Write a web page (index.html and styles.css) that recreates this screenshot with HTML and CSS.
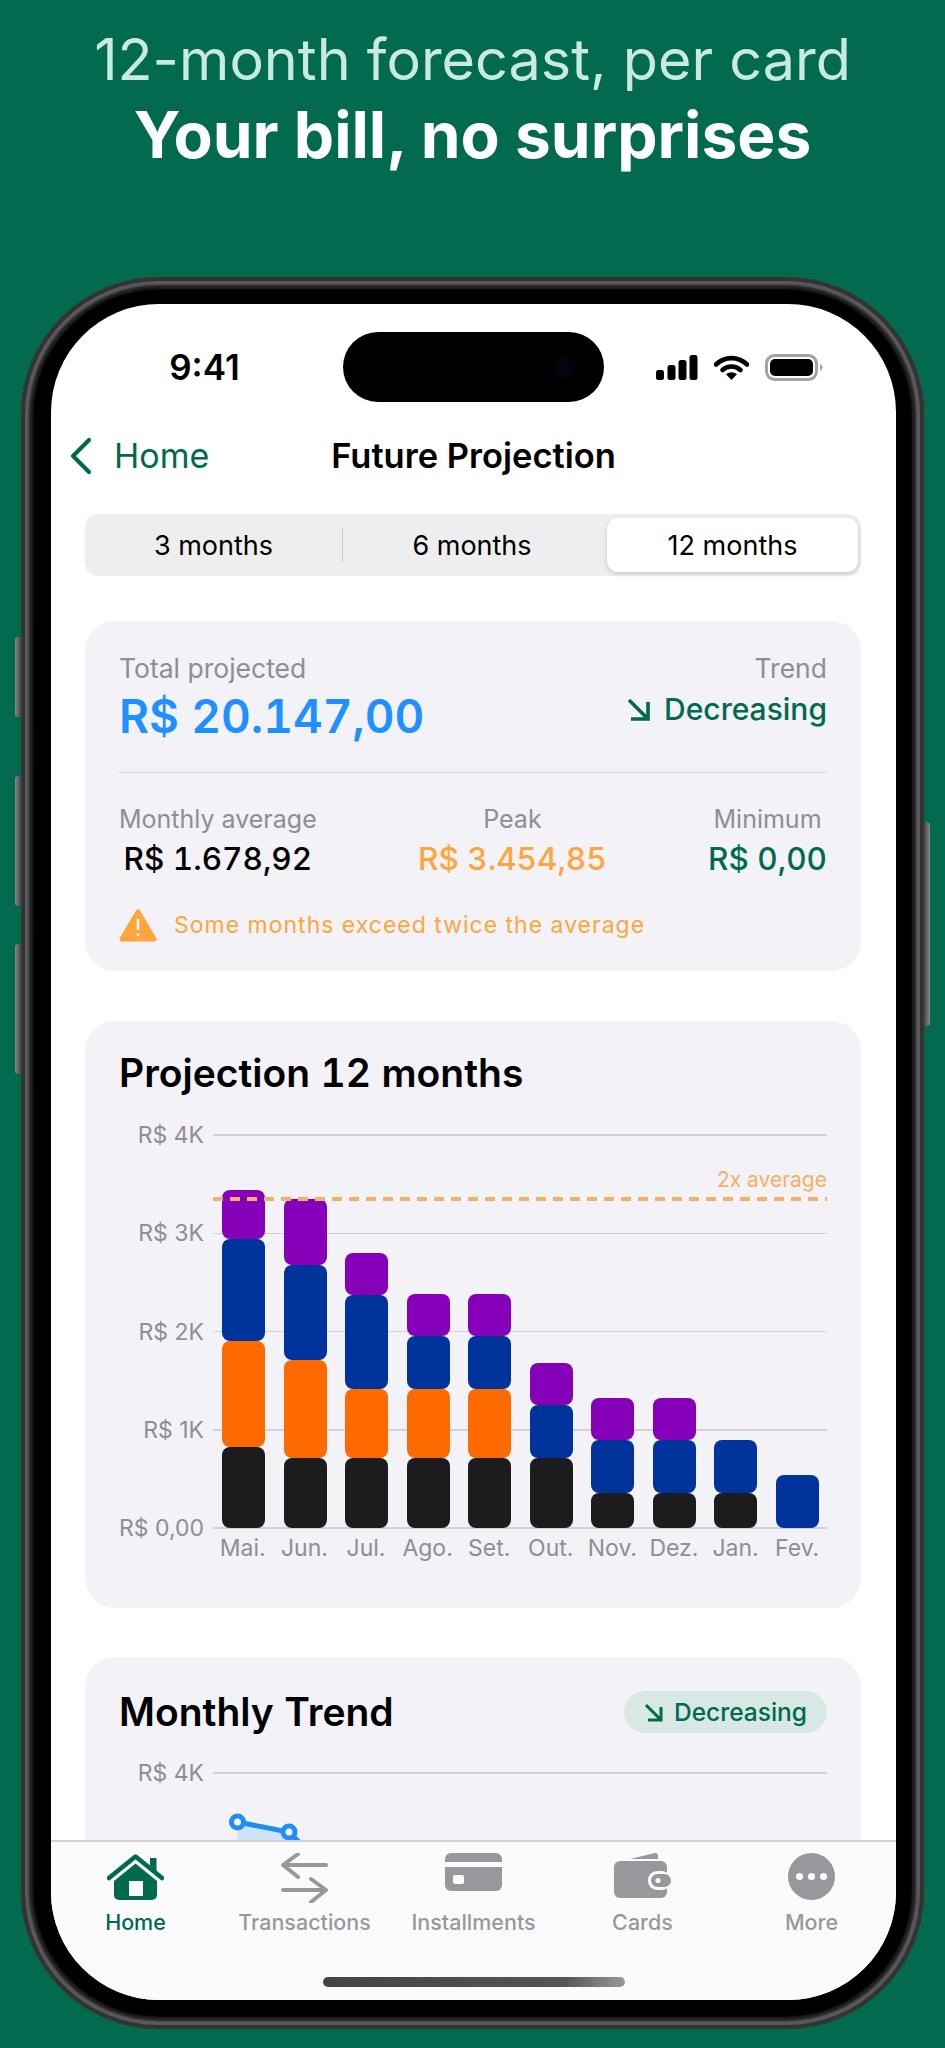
FILE: index.html
```html
<!DOCTYPE html>
<html lang="en">

<head>
    <meta charset="UTF-8">
    <title>Future Projection</title>
    <link rel="stylesheet" href="styles.css">
</head>

<body>
    <header class="promo">
        <p class="promo-sub">12-month forecast, per card</p>
        <h1 class="promo-title">Your bill, no surprises</h1>
    </header>

    <div class="phone">
        <span class="btn btn-mute"></span>
        <span class="btn btn-up"></span>
        <span class="btn btn-down"></span>
        <span class="btn btn-power"></span>

        <div class="screen">
            <div class="status">
                <span class="time">9:41</span>
                <span class="island"><i class="lens"></i></span>
                <span class="status-icons">
                    <svg width="42" height="25" viewBox="0 0 42 25"><rect x="0" y="15" width="8" height="10" rx="2.5"/><rect x="11.5" y="10" width="8" height="15" rx="2.5"/><rect x="22.5" y="5" width="8" height="20" rx="2.5"/><rect x="33.5" y="0" width="8" height="25" rx="2.5"/></svg>
                    <svg width="35" height="25" viewBox="0 0 35 25"><path d="M2 9.5C11 1 24 1 33 9.5" fill="none" stroke="#000" stroke-width="4.6" stroke-linecap="round"/><path d="M8.5 15C13.8 10.3 21.2 10.3 26.5 15" fill="none" stroke="#000" stroke-width="4.6" stroke-linecap="round"/><path d="M12 19.3C15.5 16.4 19.5 16.4 23 19.3L17.5 25Z"/></svg>
                    <svg width="58" height="27" viewBox="0 0 58 27"><rect x="1.5" y="1.5" width="50" height="24" rx="8" fill="none" stroke="#a2a2a2" stroke-width="3"/><rect x="5" y="5" width="43" height="17" rx="5"/><path d="M55 9.5L58 13.5L55 17.5Z" fill="#a2a2a2"/></svg>
                </span>
            </div>

            <nav class="navbar">
                <a class="back" href="javascript:void(0);">
                    <svg width="25" height="38" viewBox="0 0 25 38"><path d="M21 3L5 19L21 35" fill="none" stroke="#006a4e" stroke-width="4.2" stroke-linecap="round" stroke-linejoin="round"/></svg>
                    Home
                </a>
                <span class="nav-title">Future Projection</span>
            </nav>

            <div class="segment">
                <a class="seg-item" href="javascript:void(0);">3 months</a>
                <a class="seg-item seg-split" href="javascript:void(0);">6 months</a>
                <a class="seg-item seg-active" href="javascript:void(0);">12 months</a>
            </div>

            <section class="card card-summary">
                <div class="total-row">
                    <div>
                        <p class="label label-big">Total projected</p>
                        <p class="total">R$ 20.147,00</p>
                    </div>
                    <div class="trend">
                        <p class="label label-big">Trend</p>
                        <p class="trend-value">
                            <svg width="25" height="23" viewBox="0 0 25 23"><path d="M3 2L22 21M22 4V21H5" fill="none" stroke="#006a4e" stroke-width="3.6"/></svg>
                            Decreasing
                        </p>
                    </div>
                </div>
                <div class="stats">
                    <div class="stat">
                        <p class="label">Monthly average</p>
                        <p class="stat-value">R$ 1.678,92</p>
                    </div>
                    <div class="stat">
                        <p class="label">Peak</p>
                        <p class="stat-value orange">R$ 3.454,85</p>
                    </div>
                    <div class="stat">
                        <p class="label">Minimum</p>
                        <p class="stat-value green">R$ 0,00</p>
                    </div>
                </div>
                <p class="warning">
                    <svg width="38" height="33" viewBox="0 0 38 33"><path d="M19 3L35 30H3Z" fill="#ffa53d" stroke="#ffa53d" stroke-width="5" stroke-linejoin="round"/><rect x="17.7" y="10" width="2.6" height="11" fill="#f2f2f7"/><rect x="17.7" y="24" width="2.6" height="3" fill="#f2f2f7"/></svg>
                    Some months exceed twice the average
                </p>
            </section>

            <section class="card card-chart">
                <h2 class="card-title">Projection 12 months</h2>
                <div class="chart">
                    <div class="grid">
                        <div class="grid-row"><span>R$ 4K</span><i></i></div>
                        <div class="grid-row"><span>R$ 3K</span><i></i></div>
                        <div class="grid-row"><span>R$ 2K</span><i></i></div>
                        <div class="grid-row"><span>R$ 1K</span><i></i></div>
                        <div class="grid-row"><span>R$ 0,00</span><i></i></div>
                    </div>
                    <div class="bars">
                        <div class="bar"><b class="purple" style="height:49px"></b><b class="blue" style="height:102px"></b><b class="bright" style="height:106px"></b><b class="dark" style="height:81px"></b></div>
                        <div class="bar"><b class="purple" style="height:66px"></b><b class="blue" style="height:95px"></b><b class="bright" style="height:98px"></b><b class="dark" style="height:70px"></b></div>
                        <div class="bar"><b class="purple" style="height:42px"></b><b class="blue" style="height:94px"></b><b class="bright" style="height:69px"></b><b class="dark" style="height:70px"></b></div>
                        <div class="bar"><b class="purple" style="height:42px"></b><b class="blue" style="height:53px"></b><b class="bright" style="height:69px"></b><b class="dark" style="height:70px"></b></div>
                        <div class="bar"><b class="purple" style="height:42px"></b><b class="blue" style="height:53px"></b><b class="bright" style="height:69px"></b><b class="dark" style="height:70px"></b></div>
                        <div class="bar"><b class="purple" style="height:42px"></b><b class="blue" style="height:53px"></b><b class="dark" style="height:70px"></b></div>
                        <div class="bar"><b class="purple" style="height:42px"></b><b class="blue" style="height:53px"></b><b class="dark" style="height:35px"></b></div>
                        <div class="bar"><b class="purple" style="height:42px"></b><b class="blue" style="height:53px"></b><b class="dark" style="height:35px"></b></div>
                        <div class="bar"><b class="blue" style="height:53px"></b><b class="dark" style="height:35px"></b></div>
                        <div class="bar"><b class="blue" style="height:53px"></b></div>
                    </div>
                    <span class="avg-label">2x average</span>
                    <span class="avg-line"></span>
                </div>
                <div class="months">
                    <span>Mai.</span><span>Jun.</span><span>Jul.</span><span>Ago.</span><span>Set.</span>
                    <span>Out.</span><span>Nov.</span><span>Dez.</span><span>Jan.</span><span>Fev.</span>
                </div>
            </section>

            <section class="card card-trend">
                <div class="trend-head">
                    <h2 class="card-title">Monthly Trend</h2>
                    <span class="pill">
                        <svg width="20" height="19" viewBox="0 0 20 19"><path d="M2 2L17 17M17 4V17H4" fill="none" stroke="#006a4e" stroke-width="3"/></svg>
                        Decreasing
                    </span>
                </div>
                <div class="grid-row grid-single"><span>R$ 4K</span><i></i></div>
                <svg class="line-chart" width="200" height="110" viewBox="0 0 200 110">
                    <path d="M24.5 41L76 51L130 105V110H24.5Z" fill="#cfe4fa"/>
                    <path d="M24.5 41L76 51L130 105" fill="none" stroke="#1e8ff5" stroke-width="5"/>
                    <circle cx="24.5" cy="41" r="6" fill="#f2f2f7" stroke="#1e8ff5" stroke-width="5"/>
                    <circle cx="76" cy="51" r="6" fill="#f2f2f7" stroke="#1e8ff5" stroke-width="5"/>
                </svg>
            </section>

            <div class="tabbar">
                <div class="tabs">
                    <a class="tab tab-active" href="javascript:void(0);">
                        <svg width="57" height="47" viewBox="0 0 57 47"><path d="M2 25L28.5 3.5L55 25" fill="none" stroke="#006a4e" stroke-width="4.6" stroke-linecap="round" stroke-linejoin="round"/><rect x="43" y="5" width="6.5" height="13" fill="#006a4e"/><path d="M28.5 10.5L50 28V42a5 5 0 0 1-5 5H12a5 5 0 0 1-5-5V28Z" fill="#006a4e"/><rect x="22" y="28" width="14" height="15" fill="#fbfbfd"/></svg>
                        Home
                    </a>
                    <a class="tab" href="javascript:void(0);">
                        <svg width="47" height="50" viewBox="0 0 47 50"><path d="M45 12H2M17 1L2 12L17 24M2 37H45M30 26L45 37L30 49" fill="none" stroke="#98989c" stroke-width="4" stroke-linecap="round" stroke-linejoin="round"/></svg>
                        Transactions
                    </a>
                    <a class="tab" href="javascript:void(0);">
                        <svg width="57" height="38" viewBox="0 0 57 38"><path d="M0 9V6a6 6 0 0 1 6-6H51a6 6 0 0 1 6 6V9Z" fill="#98989c"/><path d="M0 14H57V32a6 6 0 0 1-6 6H6a6 6 0 0 1-6-6Z" fill="#98989c"/><rect x="8" y="22" width="11" height="9" rx="2" fill="#fbfbfd"/></svg>
                        Installments
                    </a>
                    <a class="tab" href="javascript:void(0);">
                        <svg width="57" height="45" viewBox="0 0 57 45"><path d="M16 6L41 0a3 3 0 0 1 3 3V6Z" fill="#98989c"/><rect x="0" y="8" width="53" height="37" rx="6" fill="#98989c"/><rect x="34" y="18" width="23" height="19" rx="9" fill="#fbfbfd"/><rect x="37" y="21" width="20" height="13" rx="6.5" fill="#98989c"/><circle cx="44" cy="27.5" r="2.6" fill="#fbfbfd"/></svg>
                        Cards
                    </a>
                    <a class="tab" href="javascript:void(0);">
                        <svg width="47" height="47" viewBox="0 0 47 47"><circle cx="23.5" cy="23.5" r="23.5" fill="#98989c"/><circle cx="11.5" cy="23.5" r="3.6" fill="#fbfbfd"/><circle cx="23.5" cy="23.5" r="3.6" fill="#fbfbfd"/><circle cx="35.5" cy="23.5" r="3.6" fill="#fbfbfd"/></svg>
                        More
                    </a>
                </div>
                <span class="home-bar"></span>
            </div>
        </div>
    </div>
</body>

</html>
```

FILE: styles.css
```css
* {
    margin: 0;
    padding: 0;
    box-sizing: border-box;
    font-family: Inter, 'Liberation Sans', sans-serif;
}

a {
    text-decoration: none;
}

html,
body {
    height: 100%;
}

body {
    width: 945px;
    height: 2048px;
    background: #016a4f;
    overflow: hidden;
}

.promo {
    height: 277px;
    padding-top: 21px;
    text-align: center;
}

.promo-sub {
    font-size: 57.5px;
    line-height: 76px;
    color: #c9eadf;
}

.promo-title {
    font-size: 64px;
    line-height: 76px;
    font-weight: 700;
    color: #fff;
}

/* phone frame */
.phone {
    position: relative;
    width: 903px;
    height: 1752px;
    margin-left: 21px;
    padding: 27px 28px 27px 30px;
    border-radius: 138px;
    background: #000;
    box-shadow: inset 0 0 0 4px #333, inset 0 0 2px 8px #5a5a5a, inset 0 0 2px 12px #222;
}

.btn {
    position: absolute;
    width: 8px;
    background: linear-gradient(90deg, #8a8a8a, #2c2c2c);
    border-radius: 3px;
}

.btn-mute {
    left: -6px;
    top: 360px;
    height: 80px;
}

.btn-up {
    left: -6px;
    top: 499px;
    height: 130px;
}

.btn-down {
    left: -6px;
    top: 667px;
    height: 130px;
}

.btn-power {
    right: -6px;
    top: 545px;
    height: 204px;
    background: linear-gradient(90deg, #2c2c2c, #8a8a8a);
}

.screen {
    position: relative;
    height: 1696px;
    border-radius: 108px;
    background: #fff;
    overflow: hidden;
}

/* status bar */
.status {
    display: grid;
    grid-template-columns: 1fr 261px 1fr;
    align-items: center;
    height: 126px;
}

.time {
    padding-left: 15px;
    text-align: center;
    font-size: 35px;
    font-weight: 600;
    color: #000;
}

.island {
    display: flex;
    align-items: center;
    justify-content: flex-end;
    height: 70px;
    padding-right: 28px;
    border-radius: 35px;
    background: #000;
}

.lens {
    width: 22px;
    height: 22px;
    border-radius: 50%;
    background: #03040f;
}

.status-icons {
    display: flex;
    align-items: center;
    gap: 16px;
    padding-left: 52px;
}

/* nav */
.navbar {
    position: relative;
    display: flex;
    align-items: center;
    justify-content: center;
    height: 50px;
}

.back {
    position: absolute;
    left: 17px;
    top: 7px;
    display: flex;
    align-items: center;
    gap: 21px;
    font-size: 34px;
    line-height: 38px;
    color: #006a4e;
}

.nav-title {
    font-size: 34.5px;
    font-weight: 600;
    color: #000;
}

/* segment */
.segment {
    display: grid;
    grid-template-columns: 257px 265px 1fr;
    height: 62px;
    margin: 34px 35px 0 34px;
    padding: 4px 3px 4px 0;
    border-radius: 13px;
    background: #eeeeef;
}

.seg-item {
    display: flex;
    align-items: center;
    justify-content: center;
    font-size: 27px;
    color: #000;
}

.seg-split {
    position: relative;
    padding-right: 5px;
}

.seg-split::before {
    content: "";
    position: absolute;
    left: 0;
    top: 10px;
    bottom: 10px;
    width: 1px;
    background: #c9c9ce;
}

.seg-active {
    background: #fff;
    border-radius: 11px;
    box-shadow: 0 2px 5px rgba(0, 0, 0, .16);
}

/* cards */
.card {
    margin: 45px 35px 0 34px;
    padding: 0 34px;
    border-radius: 30px;
    background: #f2f2f7;
}

.label {
    font-size: 25px;
    line-height: 30px;
    color: #8e8e93;
}

.label-big {
    font-size: 26.5px;
}

.card-summary {
    height: 350px;
    padding-top: 32px;
}

.total-row {
    display: flex;
    justify-content: space-between;
    height: 120px;
    border-bottom: 1px solid #d6d6db;
}

.total {
    margin-top: 7px;
    font-size: 46px;
    line-height: 52px;
    font-weight: 600;
    font-variant-numeric: tabular-nums;
    color: #1e90ff;
}

.trend {
    text-align: right;
}

.trend-value {
    display: flex;
    align-items: center;
    gap: 13px;
    margin-top: 6px;
    font-size: 30px;
    line-height: 40px;
    font-weight: 500;
    color: #006a4e;
}

.stats {
    display: flex;
    justify-content: space-between;
    margin-top: 31px;
}

.stat {
    text-align: center;
}

.stat-value {
    margin-top: 8px;
    font-size: 31.5px;
    line-height: 34px;
    font-weight: 500;
    font-variant-numeric: tabular-nums;
    color: #000;
}

.orange {
    color: #ffa53d;
}

.green {
    color: #006a4e;
}

.warning {
    display: flex;
    align-items: center;
    gap: 17px;
    margin-top: 31px;
    font-size: 23px;
    line-height: 36px;
    letter-spacing: 1px;
    color: #ffa53d;
}

.card-title {
    font-size: 39px;
    line-height: 44px;
    font-weight: 600;
    font-variant-numeric: tabular-nums;
    color: #000;
}

.card-chart {
    height: 587px;
    margin-top: 50px;
    padding-top: 30px;
}

.chart {
    position: relative;
    display: grid;
    height: 409px;
    margin-top: 32px;
}

.grid {
    grid-area: 1 / 1;
    display: flex;
    flex-direction: column;
    justify-content: space-between;
}

.grid-row {
    display: flex;
    align-items: center;
    gap: 9px;
    height: 16px;
}

.grid-row span {
    width: 85px;
    flex: none;
    font-size: 23px;
    text-align: right;
    white-space: nowrap;
    color: #8e8e93;
}

.grid-row i {
    flex: 1;
    height: 1.5px;
    background: #d1d1d6;
}

.bars {
    grid-area: 1 / 1;
    display: flex;
    align-items: flex-end;
    justify-content: space-between;
    padding: 0 8px 8px 103px;
}

.bar {
    width: 43px;
}

.bar b {
    display: block;
    border-radius: 8px;
}

.purple {
    background: #8600ba;
}

.blue {
    background: #00339c;
}

.bright {
    background: #ff6a00;
}

.dark {
    background: #1c1c1e;
}

.avg-label {
    position: absolute;
    right: 0;
    top: 41px;
    font-size: 21px;
    line-height: 24px;
    color: #f5b063;
}

.avg-line {
    position: absolute;
    left: 94px;
    right: 0;
    top: 70px;
    height: 4px;
    background: repeating-linear-gradient(90deg, #f5b063 0 10px, transparent 10px 17px);
}

.months {
    display: flex;
    padding-left: 93px;
    margin-top: 1px;
    font-size: 23px;
    line-height: 22px;
    color: #8e8e93;
}

.months span {
    width: 61.6px;
    flex: none;
    text-align: center;
}

.card-trend {
    height: 300px;
    margin-top: 49px;
    padding-top: 33px;
}

.trend-head {
    display: flex;
    align-items: center;
    justify-content: space-between;
    height: 44px;
}

.pill {
    display: flex;
    align-items: center;
    gap: 10px;
    width: 203px;
    justify-content: center;
    height: 42px;
    border-radius: 21px;
    background: #d8e8e4;
    font-size: 24.5px;
    font-weight: 500;
    color: #006a4e;
}

.grid-single {
    margin-top: 31px;
}

.line-chart {
    display: block;
    margin-left: 94px;
}

/* tab bar */
.tabbar {
    position: absolute;
    left: 0;
    right: 0;
    bottom: 0;
    height: 160px;
    padding-top: 11px;
    border-top: 2px solid #d4d4d8;
    background: #fbfbfd;
}

.tabs {
    display: grid;
    grid-template-columns: repeat(5, 1fr);
}

.tab {
    display: flex;
    flex-direction: column;
    align-items: center;
    justify-content: space-between;
    height: 81px;
    font-size: 21.5px;
    line-height: 24px;
    font-weight: 500;
    color: #98989c;
}

.tab-active {
    color: #006a4e;
}

.home-bar {
    display: block;
    width: 302px;
    height: 10px;
    margin: 43px auto 0;
    border-radius: 5px;
    background: linear-gradient(90deg, #444 0, #555 80%, #999 100%);
}
```
